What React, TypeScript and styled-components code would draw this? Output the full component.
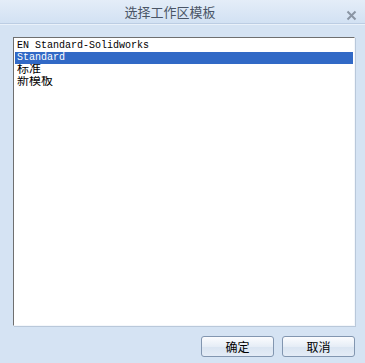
import React from "react";
import styled, { createGlobalStyle } from "styled-components";

const Global = createGlobalStyle`
  html, body { margin: 0; padding: 0; }
  body { width: 365px; height: 363px; overflow: hidden; background: #d5e3f3; }
`;

const Dialog = styled.div`
  width: 365px;
  height: 363px;
  display: flex;
  flex-direction: column;
  background: #d5e3f3;
  font-family: "Noto Sans CJK SC", sans-serif;
`;

const TitleBar = styled.div`
  height: 24px;
  flex: none;
  position: relative;
  display: flex;
  align-items: center;
  justify-content: center;
  background: linear-gradient(#e4edf8, #d2e1f3);
  border-bottom: 1px solid #bccde3;
  box-shadow: 0 1px 0 #e9f1fa;
  color: #4a5566;
  font-size: 13px;
  padding-right: 25px;
  box-sizing: border-box;
`;

const Close = styled.div`
  position: absolute;
  right: 8px;
  top: 6px;
  width: 11px;
  height: 11px;
`;

const Body = styled.div`
  flex: 1;
  display: flex;
  flex-direction: column;
  padding: 13px 10px 6px 13px;
`;

const List = styled.div`
  height: 289px;
  background: #fff;
  border-top: 1px solid #6f6f6f;
  border-left: 1px solid #6f6f6f;
  border-right: 1px solid #f4f7fb;
  border-bottom: 1px solid #f4f7fb;
  box-shadow: 1px 1px 0 #b9c8da;
  padding: 2px 1px;
  box-sizing: border-box;
`;

const Row = styled.div<{ $sel?: boolean; $cjk?: boolean }>`
  height: 12px;
  line-height: 12px;
  overflow: hidden;
  padding-left: 2px;
  font-family: "Liberation Mono", "Noto Sans CJK SC", monospace;
  font-size: ${(p) => (p.$cjk ? "12px" : "10px")};
  color: ${(p) => (p.$sel ? "#fff" : "#000")};
  background: ${(p) => (p.$sel ? "#3169c6" : "transparent")};
  white-space: pre;
`;

const Buttons = styled.div`
  display: flex;
  justify-content: flex-end;
  gap: 8px;
  margin-top: 10px;
`;

const Button = styled.button`
  width: 73px;
  height: 21px;
  border: 1px solid #8296b0;
  border-radius: 3px;
  background: linear-gradient(#fbfcfe, #e6edf6 50%, #d9e4f1 51%, #e4ecf6);
  font-family: "Noto Sans CJK SC", sans-serif;
  font-size: 12px;
  color: #000;
  padding: 0;
  line-height: 19px;
`;

export default function App() {
  return (
    <>
      <Global />
      <Dialog>
        <TitleBar>
          选择工作区模板
          <Close>
            <svg width="11" height="11" viewBox="0 0 11 11">
              <path d="M1.5 1.5 L9.5 9.5 M9.5 1.5 L1.5 9.5" stroke="#8a95a4" strokeWidth="2" />
            </svg>
          </Close>
        </TitleBar>
        <Body>
          <List>
            <Row>EN Standard-Solidworks</Row>
            <Row $sel>Standard</Row>
            <Row $cjk>标准</Row>
            <Row $cjk>新模板</Row>
          </List>
          <Buttons>
            <Button>确定</Button>
            <Button>取消</Button>
          </Buttons>
        </Body>
      </Dialog>
    </>
  );
}
